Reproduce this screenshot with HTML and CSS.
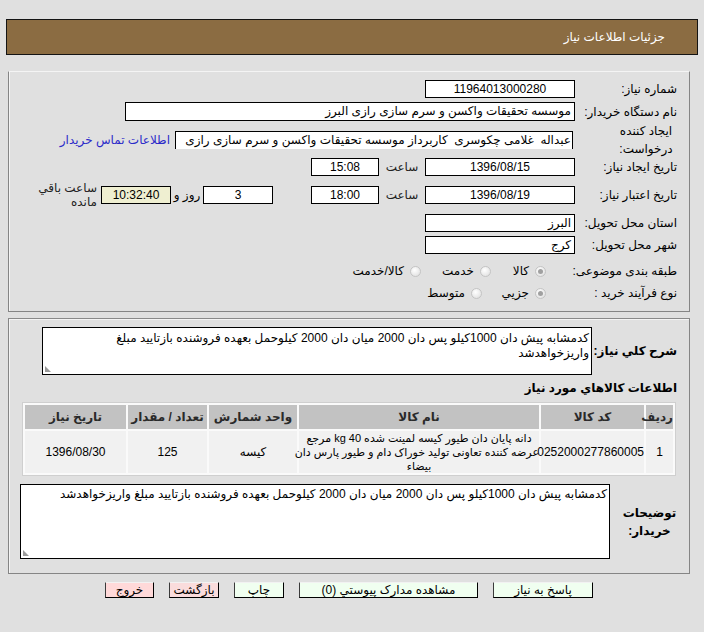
FILE: index.html
```html
<!DOCTYPE html>
<html lang="fa" dir="rtl">
<head>
<meta charset="utf-8">
<title>جزئیات اطلاعات نیاز</title>
<link rel="stylesheet" href="styles.css">
</head>
<body>
<div class="header"><span class="title">جزئیات اطلاعات نیاز</span></div>

<div class="panel p1">
  <div class="row">
    <div class="lbl">شماره نیاز:</div>
    <div class="box w150 center">11964013000280</div>
  </div>
  <div class="row r2">
    <div class="lbl">نام دستگاه خریدار:</div>
    <div class="box w450 tall">موسسه تحقیقات واکسن و سرم سازی رازی البرز</div>
  </div>
  <div class="row r3">
    <div class="lbl lbl-two lbl-center">ایجاد کننده<br>درخواست:</div>
    <div class="box w398 clip">عبداله&nbsp; غلامی چکوسری&nbsp; کاربرداز موسسه تحقیقات واکسن و سرم سازی رازی</div>
    <a class="link" href="#">اطلاعات تماس خریدار</a>
  </div>
  <div class="row">
    <div class="lbl">تاریخ ایجاد نیاز:</div>
    <div class="box w150 center">1396/08/15</div>
    <span class="sa">ساعت</span>
    <div class="box w68 center">15:08</div>
  </div>
  <div class="row r5">
    <div class="lbl">تاریخ اعتبار نیاز:</div>
    <div class="box w150 center">1396/08/19</div>
    <span class="sa">ساعت</span>
    <div class="box w68 center">18:00</div>
    <div class="box w70 center gap38">3</div>
    <span class="roz">روز و</span>
    <div class="box w70 center beige">10:32:40</div>
    <div class="lbl-two remain">ساعت باقي<br>مانده</div>
  </div>
  <div class="row">
    <div class="lbl">استان محل تحویل:</div>
    <div class="box w150">البرز</div>
  </div>
  <div class="row">
    <div class="lbl">شهر محل تحویل:</div>
    <div class="box w150">کرج</div>
  </div>
  <div class="row r8">
    <div class="lbl">طبقه بندی موضوعی:</div>
    <div class="opts">
      <span class="opt o1"><span class="radio on"></span><span>کالا</span></span>
      <span class="opt o2"><span class="radio"></span><span>خدمت</span></span>
      <span class="opt"><span class="radio"></span><span>کالا/خدمت</span></span>
    </div>
  </div>
  <div class="row">
    <div class="lbl">نوع فرآیند خرید :</div>
    <div class="opts">
      <span class="opt o3"><span class="radio on"></span><span>جزيي</span></span>
      <span class="opt"><span class="radio"></span><span>متوسط</span></span>
    </div>
  </div>
</div>

<div class="panel p2">
  <div class="desc-row">
    <div class="lbl-b">شرح کلي نياز:</div>
    <div class="area a1">کدمشابه پیش دان 1000کیلو پس دان 2000 میان دان 2000 کیلوحمل بعهده فروشنده بازتایید مبلغ<br>واریزخواهدشد<span class="grip"></span></div>
  </div>
  <div class="heading">اطلاعات کالاهاي مورد نياز</div>
  <table class="goods">
    <thead>
      <tr>
        <th class="c1">ردیف</th>
        <th class="c2">کد کالا</th>
        <th class="c3">نام کالا</th>
        <th class="c4">واحد شمارش</th>
        <th class="c5">تعداد / مقدار</th>
        <th class="c6">تاریخ نیاز</th>
      </tr>
    </thead>
    <tbody>
      <tr>
        <td>1</td>
        <td>0252000277860005</td>
        <td class="name"><span class="nl">دانه پایان دان طیور کیسه لمینت شده 40 kg مرجع</span><span class="nl nl2">عرضه کننده تعاونی تولید خوراک دام و طیور پارس دان</span><span class="nl">بیضاء</span></td>
        <td>کیسه</td>
        <td>125</td>
        <td>1396/08/30</td>
      </tr>
    </tbody>
  </table>
  <div class="note-row">
    <div class="lbl-note">توضیحات<br>خریدار:</div>
    <div class="area a2">کدمشابه پیش دان 1000کیلو پس دان 2000 میان دان 2000 کیلوحمل بعهده فروشنده بازتایید مبلغ واریزخواهدشد<span class="grip"></span></div>
  </div>
</div>

<div class="btns">
  <button class="btn b-reply">پاسخ به نیاز</button>
  <button class="btn b-docs">مشاهده مدارک پیوستي (0)</button>
  <button class="btn b-print">چاپ</button>
  <button class="btn b-back">بازگشت</button>
  <button class="btn b-exit">خروج</button>
</div>
</body>
</html>
```

FILE: styles.css
```css
* { box-sizing: border-box; }

body {
  margin: 0;
  background: #e0e0e0;
  direction: rtl;
  font-family: "Liberation Sans", "DejaVu Sans", sans-serif;
  font-size: 12px;
  color: #000;
}

.header {
  margin: 19px 6px 0 6px;
  height: 36px;
  border: 1px solid #141414;
  background: #8b6c42;
  display: flex;
  align-items: center;
  padding-right: 32px;
  color: #fff;
  font-size: 12px;
}

.panel {
  margin: 0 14px 0 8px;
  border: 1px solid #858585;
  border-top-color: #f4f4f4;
  box-shadow: inset 1px 0 0 #f4f4f4;
}

.p1 {
  margin-top: 16px;
  padding: 6px 12px 7px 9px;
}

.p2 {
  margin-top: 6px;
  padding: 8px 0 14px 0;
  border-top-color: #8a8a8a;
  box-shadow: inset 1px 1px 0 #f4f4f4;
}

.row {
  display: flex;
  align-items: center;
  height: 22px;
}
.r2 { height: 23px; }
.r3 { height: 33px; }
.r5 { height: 34px; }
.r8 { margin-top: 4px; }

.lbl {
  width: 102px;
  flex: none;
  white-space: nowrap;
  line-height: 14px;
}
.lbl-two { line-height: 18px; }
.lbl-center { text-align: center; padding-left: 40px; }

.box {
  flex: none;
  height: 18px;
  border: 1px solid #000;
  background: #fff;
  line-height: 16px;
  padding: 0 3px;
  white-space: nowrap;
  overflow: hidden;
}
.tall { height: 19px; line-height: 17px; }
.center { text-align: center; }
.w150 { width: 150px; }
.w450 { width: 450px; }
.w398 { width: 398px; margin-right: 2px; }
.w68 { width: 68px; }
.w70 { width: 70px; }
.clip { border-bottom: none; line-height: 17px; padding-right: 1px; }
.beige { background: #efefd1; }
.gap38 { margin-right: 38px; }

.link {
  margin-right: 5px;
  color: #2b2bc9;
  text-decoration: none;
  white-space: nowrap;
}

.sa {
  width: 46px;
  flex: none;
  text-align: center;
  color: #222;
}
.roz {
  width: 32px;
  flex: none;
  text-align: center;
}
.remain {
  margin-right: 4px;
  white-space: nowrap;
  line-height: 14px;
  color: #222;
}

.opts {
  display: flex;
  align-items: center;
  margin-right: 29px;
}
.opt {
  display: flex;
  align-items: center;
  gap: 6px;
  white-space: nowrap;
}
.o1 { width: 55px; }
.o2 { width: 70px; }
.o3 { width: 64px; }

.radio {
  width: 11px;
  height: 11px;
  border-radius: 50%;
  border: 1px solid #c4c4c4;
  background: radial-gradient(circle at 40% 35%, #ffffff 0%, #e6e6e6 70%, #d8d8d8 100%);
  display: flex;
  align-items: center;
  justify-content: center;
  flex: none;
}
.radio.on::after {
  content: "";
  width: 5px;
  height: 5px;
  border-radius: 50%;
  background: #a0a0a0;
}

.desc-row {
  display: flex;
  align-items: center;
  padding-right: 12px;
}
.lbl-b {
  width: 85px;
  flex: none;
  font-weight: bold;
  white-space: nowrap;
}

.area {
  position: relative;
  background: #fff;
  border: 1px solid #000;
  padding: 3px 2px 0 2px;
  line-height: 15px;
  flex: none;
}
.a1 { width: 550px; height: 48px; }
.a2 { width: 590px; height: 75px; padding-top: 2px; }

.grip {
  position: absolute;
  left: 2px;
  bottom: 2px;
  width: 6px;
  height: 6px;
  background-image: radial-gradient(circle, #9a9a9a 0.8px, transparent 1px);
  background-size: 2px 2px;
  clip-path: polygon(0 0, 100% 100%, 0 100%);
}

.heading {
  margin-top: 6px;
  padding-right: 12px;
  height: 14px;
  line-height: 14px;
  font-weight: bold;
}

.goods {
  margin: 7px 13px 0 13px;
  width: 654px;
  border: 1px solid #cfcfcf;
  border-spacing: 2px;
  background: #fafafa;
  table-layout: fixed;
}
.goods th {
  background: #c2c2c2;
  height: 24px;
  font-weight: bold;
  color: #2a2a2a;
  padding: 0;
  white-space: nowrap;
}
.goods td {
  background: #f1f1f1;
  height: 41px;
  text-align: center;
  padding: 0;
  line-height: 14px;
}
.goods td.name { font-size: 11px; }
.nl {
  display: block;
  white-space: nowrap;
}
.nl2 { letter-spacing: -0.35px; }
.c1 { width: 27px; }
.c2 { width: 103px; }
.c3 { width: 240px; }
.c4 { width: 88px; }
.c5 { width: 79px; }
.c6 { width: 101px; }

.note-row {
  display: flex;
  align-items: center;
  margin-top: 8px;
}
.lbl-note {
  width: 79px;
  flex: none;
  text-align: center;
  font-weight: bold;
  line-height: 18px;
}

.btns {
  display: flex;
  justify-content: center;
  gap: 15px;
  margin: 8px 14px 0 8px;
}
.btn {
  height: 16px;
  padding: 0;
  border: 1px solid #000;
  border-top-color: #f2f2f2;
  border-left-color: #3a3a3a;
  background: #f0fff0;
  font-family: "Liberation Sans", "DejaVu Sans", sans-serif;
  font-size: 12px;
  line-height: 14px;
  color: #000;
  white-space: nowrap;
  overflow: visible;
}
.b-reply { width: 100px; }
.b-docs { width: 179px; }
.b-print { width: 50px; }
.b-back { width: 50px; background: #fadcdc; }
.b-exit { width: 49px; background: #ffd9d9; }
```
